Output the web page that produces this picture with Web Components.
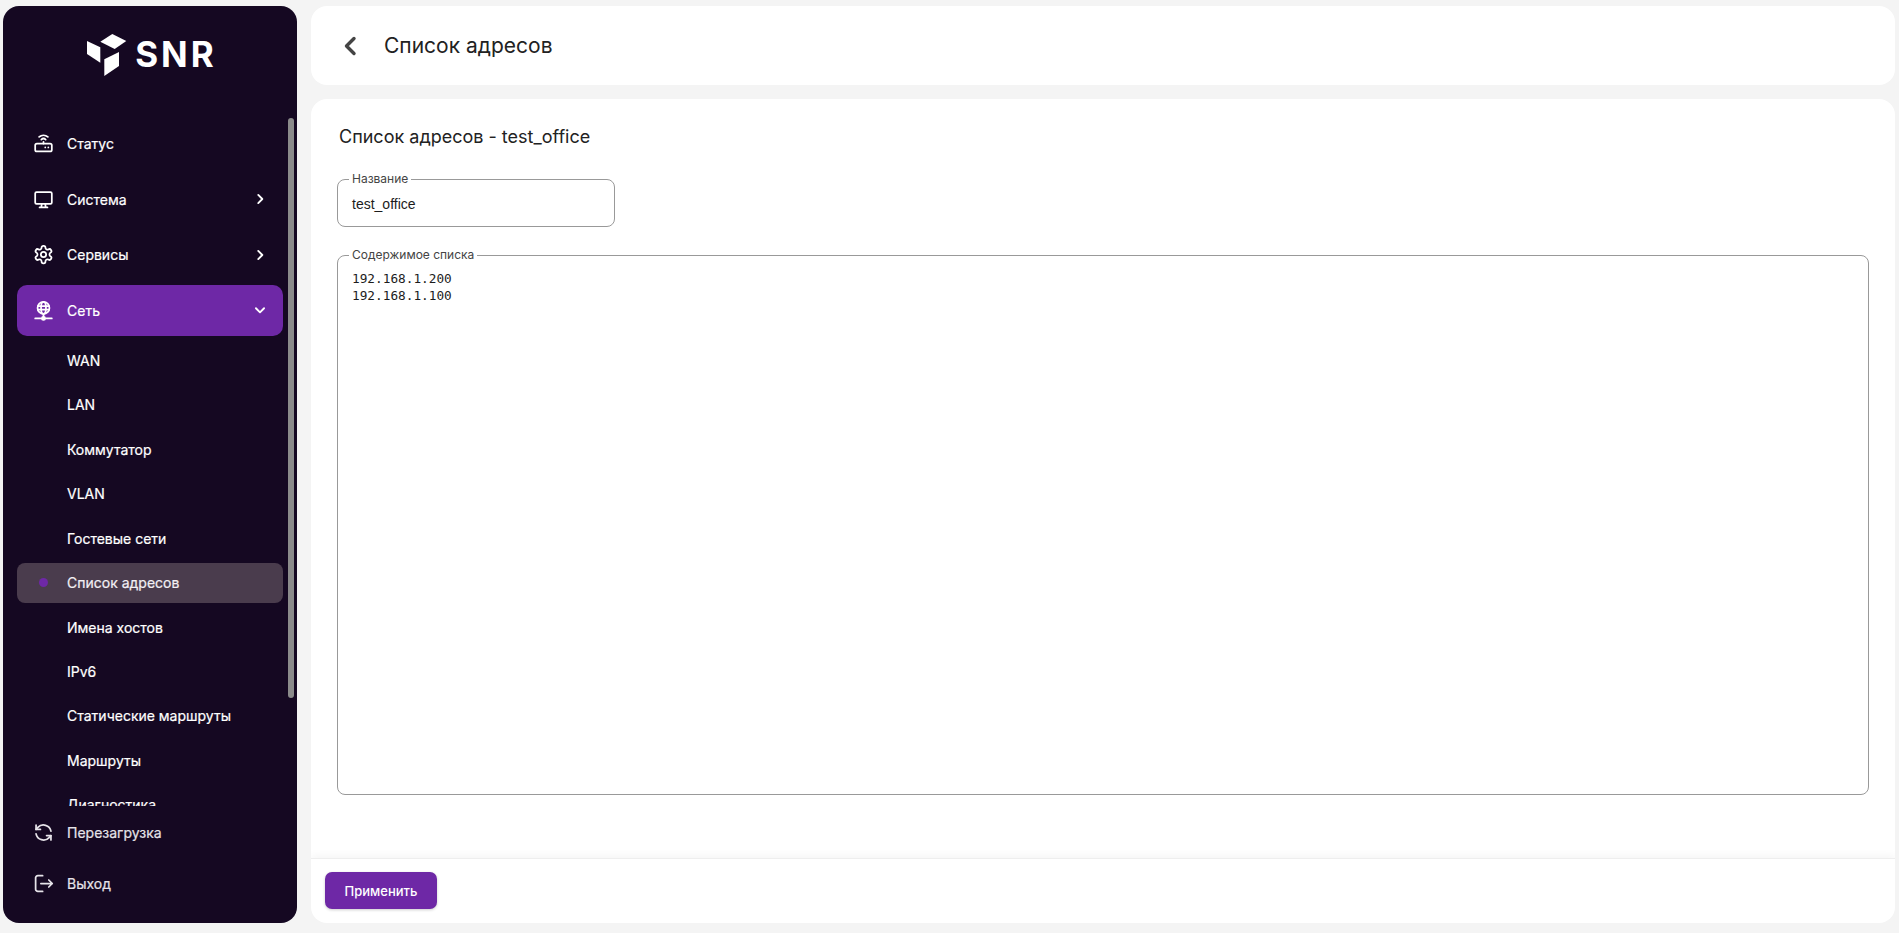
<!DOCTYPE html>
<html lang="ru">
<head>
<meta charset="utf-8">
<title>Список адресов</title>
<style>
    html, body { margin: 0; height: 100%; }
    body { background: #f4f4f4; overflow: hidden; font-family: Inter, "Liberation Sans", sans-serif; }
</style>
</head>
<body>
<app-shell>
    <side-bar slot="side">
        <nav-item slot="nav" icon="router">Статус</nav-item>
        <nav-item slot="nav" icon="monitor" arrow="right">Система</nav-item>
        <nav-item slot="nav" icon="gear" arrow="right">Сервисы</nav-item>
        <nav-item slot="nav" icon="globe" arrow="down" active>Сеть</nav-item>
        <sub-item slot="nav">WAN</sub-item>
        <sub-item slot="nav">LAN</sub-item>
        <sub-item slot="nav">Коммутатор</sub-item>
        <sub-item slot="nav">VLAN</sub-item>
        <sub-item slot="nav">Гостевые сети</sub-item>
        <sub-item slot="nav" current>Список адресов</sub-item>
        <sub-item slot="nav">Имена хостов</sub-item>
        <sub-item slot="nav">IPv6</sub-item>
        <sub-item slot="nav">Статические маршруты</sub-item>
        <sub-item slot="nav">Маршруты</sub-item>
        <sub-item slot="nav">Диагностика</sub-item>
        <nav-item slot="foot" icon="reload" dim>Перезагрузка</nav-item>
        <nav-item slot="foot" icon="exit" dim>Выход</nav-item>
    </side-bar>
    <page-header slot="head">Список адресов</page-header>
    <form-card slot="body" heading="Список адресов - test_office">
        <outlined-field label="Название" value="test_office"></outlined-field>
        <outlined-area label="Содержимое списка" value="192.168.1.200&#10;192.168.1.100"></outlined-area>
        <primary-button slot="actions">Применить</primary-button>
    </form-card>
</app-shell>

<script>
const ICONS = {
    router: `<rect x="2.500" y="12" width="19" height="9" rx="2"/><path d="M12 10v2M14 16.500h.01M17.500 16.500h.01"/><path d="M9.500 7.500a3.600 3.600 0 0 1 5 0M7 4.500a7.500 7.500 0 0 1 10 0"/>`,
    monitor: `<rect x="2.500" y="3.500" width="19" height="13.500" rx="1.500"/><path d="M7.500 21h9M10 17l-.5 4M14 17l.5 4"/>`,
    gear: `<path d="M12.220 2h-.44a2 2 0 0 0-2 2v.18a2 2 0 0 1-1 1.730l-.43.25a2 2 0 0 1-2 0l-.15-.08a2 2 0 0 0-2.730.73l-.22.38a2 2 0 0 0 .73 2.730l.15.1a2 2 0 0 1 1 1.720v.51a2 2 0 0 1-1 1.740l-.15.09a2 2 0 0 0-.73 2.730l.22.38a2 2 0 0 0 2.730.73l.15-.08a2 2 0 0 1 2 0l.43.25a2 2 0 0 1 1 1.730V20a2 2 0 0 0 2 2h.44a2 2 0 0 0 2-2v-.18a2 2 0 0 1 1-1.730l.43-.25a2 2 0 0 1 2 0l.15.08a2 2 0 0 0 2.730-.73l.22-.39a2 2 0 0 0-.73-2.730l-.15-.08a2 2 0 0 1-1-1.740v-.5a2 2 0 0 1 1-1.740l.15-.09a2 2 0 0 0 .73-2.730l-.22-.38a2 2 0 0 0-2.730-.73l-.15.08a2 2 0 0 1-2 0l-.43-.25a2 2 0 0 1-1-1.730V4a2 2 0 0 0-2-2z"/><circle cx="12" cy="12" r="3"/>`,
    globe: `<circle cx="12" cy="9" r="6.800"/><ellipse cx="12" cy="9" rx="2.800" ry="6.800"/><path d="M5.500 7h13M5.500 11h13M12 16v3"/><path d="M2.500 21h7M14.500 21h7"/><circle cx="12" cy="21" r="1.800" fill="currentColor"/>`,
    reload: `<path d="M20.500 10.500A8.700 8.700 0 0 0 5.600 6.200L3.500 8.500"/><path d="M3.500 3.500v5h5"/><path d="M3.500 13.500a8.700 8.700 0 0 0 14.900 4.300l2.100-2.300"/><path d="M20.500 20.500v-5h-5"/>`,
    exit: `<path d="M11 3H5.500A2.500 2.500 0 0 0 3 5.500v13A2.500 2.500 0 0 0 5.500 21H11"/><path d="M9 12h13M18 8l4 4-4 4"/>`
};

const CHEVRONS = {
    right: `<path d="M9 5l7 7-7 7"/>`,
    down: `<path d="M5 9l7 7 7-7"/>`
};

class AppShell extends HTMLElement {
    constructor() {
        super();
        this.attachShadow({ mode: "open" });
        this.shadowRoot.innerHTML = `
            <style>
            :host {
                display: grid;
                grid-template-columns: 294px 1fr;
                grid-template-rows: 79px 1fr;
                column-gap: 14px;
                row-gap: 14px;
                box-sizing: border-box;
                height: 933px;
                padding: 6px 4px 10px 3px;
            }
            .side { grid-row: 1 / 3; min-height: 0; display: flex; }
            .side ::slotted(*) { flex: 1; }
            .body { min-height: 0; display: flex; }
            .body ::slotted(*) { flex: 1; }
            </style>
            <div class="side"><slot name="side"></slot></div>
            <div><slot name="head"></slot></div>
            <div class="body"><slot name="body"></slot></div>
        `;
    }
}

class SideBar extends HTMLElement {
    constructor() {
        super();
        this.attachShadow({ mode: "open" });
        this.shadowRoot.innerHTML = `
            <style>
            :host {
                display: flex;
                flex-direction: column;
                position: relative;
                min-width: 0;
                background: #150822;
                border-radius: 16px;
                color: #fff;
                overflow: hidden;
            }
            .logo {
                height: 112px;
                flex: none;
                display: flex;
                align-items: flex-start;
                justify-content: center;
                gap: 8px;
                padding-top: 27px;
                box-sizing: border-box;
            }
            .logo svg { width: 41px; height: 44px; flex: none; }
            .logo span {
                font: 700 35px/36px Inter, "Liberation Sans", sans-serif;
                letter-spacing: 3px;
                margin-top: 3px;
                margin-right: -3px;
            }
            .nav {
                flex: 1;
                min-height: 0;
                overflow: hidden;
                display: flex;
                flex-direction: column;
                gap: 4.650px;
                padding: 0 14px;
            }
            .thumb {
                position: absolute;
                left: 285px;
                top: 112px;
                width: 6px;
                height: 580px;
                border-radius: 3px;
                background: #8b8b8b;
            }
            .foot {
                flex: none;
                height: 117px;
                box-sizing: border-box;
                padding: 0.500px 14px 0;
                display: flex;
                flex-direction: column;
            }
            </style>
            <div class="logo">
                <svg viewBox="0 0 41 44" fill="#fff">
                    <path d="M26.300 1 40.300 8 28.700 16 14.300 8.700z"/>
                    <path d="M1 8 14.300 14.300V29.700L1 21z"/>
                    <path d="M18.300 26.300 33 19V33L18.300 43z"/>
                </svg>
                <span>SNR</span>
            </div>
            <div class="nav"><slot name="nav"></slot></div>
            <div class="thumb"></div>
            <div class="foot"><slot name="foot"></slot></div>
        `;
    }
}

class NavItem extends HTMLElement {
    connectedCallback() {
        if (this.shadowRoot) return;
        this.attachShadow({ mode: "open" });
        const arrow = this.getAttribute("arrow");
        this.shadowRoot.innerHTML = `
            <style>
            :host {
                display: flex;
                align-items: center;
                flex: none;
                height: 51px;
                padding: 0 16px 0 15.500px;
                border-radius: 10px;
                font: 400 14px Inter, "Liberation Sans", sans-serif;
                -webkit-text-stroke: 0.2px currentColor;
                color: #fff;
            }
            :host([active]) { background: #6e28a6; }
            :host([dim]) { color: #e6e3e9; }
            .icon { width: 21px; height: 21px; flex: none; margin-right: 13.500px; stroke-width: 2; }
            .label { flex: 1; }
            .arrow { width: 14px; height: 14px; flex: none; stroke-width: 3.200; }
            svg { fill: none; stroke: currentColor; stroke-linecap: round; stroke-linejoin: round; }
            </style>
            <svg class="icon" viewBox="0 0 24 24">${ICONS[this.getAttribute("icon")] || ""}</svg>
            <span class="label"><slot></slot></span>
            ${arrow ? `<svg class="arrow" viewBox="0 0 24 24">${CHEVRONS[arrow]}</svg>` : ""}
        `;
    }
}

class SubItem extends HTMLElement {
    constructor() {
        super();
        this.attachShadow({ mode: "open" });
        this.shadowRoot.innerHTML = `
            <style>
            :host {
                display: flex;
                align-items: center;
                flex: none;
                height: 39.800px;
                padding-left: 50px;
                border-radius: 8px;
                font: 400 14px Inter, "Liberation Sans", sans-serif;
                -webkit-text-stroke: 0.2px currentColor;
                color: #fff;
                position: relative;
            }
            :host([current]) { background: #4a3c4d; color: #f2eff4; }
            :host([current])::before {
                content: "";
                position: absolute;
                left: 21.500px;
                top: 50%;
                width: 9px;
                height: 9px;
                margin-top: -4.500px;
                border-radius: 50%;
                background: #6e28a6;
            }
            </style>
            <slot></slot>
        `;
    }
}

class PageHeader extends HTMLElement {
    constructor() {
        super();
        this.attachShadow({ mode: "open" });
        this.shadowRoot.innerHTML = `
            <style>
            :host {
                display: flex;
                align-items: center;
                height: 79px;
                box-sizing: border-box;
                padding-left: 27px;
                background: #fff;
                border-radius: 16px;
                font: 400 21px Inter, "Liberation Sans", sans-serif;
                color: #222;
            }
            svg {
                width: 24px;
                height: 24px;
                margin-right: 22px;
                fill: none;
                stroke: #444;
                stroke-width: 3.400;
                stroke-linecap: round;
                stroke-linejoin: round;
            }
            </style>
            <svg viewBox="0 0 24 24"><path d="M16 4.500 8.500 12l7.500 7.500"/></svg>
            <slot></slot>
        `;
    }
}

class FormCard extends HTMLElement {
    constructor() {
        super();
        this.attachShadow({ mode: "open" });
        this.shadowRoot.innerHTML = `
            <style>
            :host {
                display: flex;
                flex-direction: column;
                background: #fff;
                border-radius: 16px;
                min-width: 0;
                overflow: hidden;
            }
            .content {
                flex: 1;
                min-height: 0;
                padding: 26px 26px 0 26px;
            }
            h2 {
                margin: 0 0 30px 2px;
                font: 400 18px/24px Inter, "Liberation Sans", sans-serif;
                color: #222;
            }
            .fields { display: flex; flex-direction: column; gap: 28px; }
            .actions {
                flex: none;
                height: 65px;
                box-sizing: border-box;
                padding: 13px 14px;
                border-top: 1px solid #eeeeee;
                box-shadow: 0 -3px 8px rgba(0, 0, 0, 0.04);
            }
            </style>
            <div class="content">
                <h2>${this.getAttribute("heading")}</h2>
                <div class="fields"><slot></slot></div>
            </div>
            <div class="actions"><slot name="actions"></slot></div>
        `;
    }
}

const outlineStyles = `
    fieldset {
        margin: 0;
        padding: 0 14px;
        border: 1px solid #999;
        border-radius: 8px;
        box-sizing: border-box;
        min-width: 0;
    }
    legend {
        padding: 0 3px;
        margin-left: -3px;
        font: 400 12px/14px Inter, "Liberation Sans", sans-serif;
        color: #444;
    }
`;

class OutlinedField extends HTMLElement {
    constructor() {
        super();
        this.attachShadow({ mode: "open" });
    }

    connectedCallback() {
        this.shadowRoot.innerHTML = `
            <style>
            :host { display: block; width: 278px; }
            ${outlineStyles}
            fieldset { height: 55px; margin-top: -7px; }
            .value {
                font: 400 14px/20px "Liberation Sans", sans-serif;
                color: #1c1c1c;
                margin-top: 8px;
            }
            </style>
            <fieldset>
                <legend>${this.getAttribute("label")}</legend>
                <div class="value">${this.getAttribute("value")}</div>
            </fieldset>
        `;
    }
}

class OutlinedArea extends HTMLElement {
    constructor() {
        super();
        this.attachShadow({ mode: "open" });
    }

    connectedCallback() {
        this.shadowRoot.innerHTML = `
            <style>
            :host { display: block; }
            ${outlineStyles}
            fieldset { height: 547px; margin-top: -7px; }
            pre {
                margin: 8px 0 0;
                font: 400 12.750px/17px "DejaVu Sans Mono", monospace;
                color: #1c1c1c;
            }
            </style>
            <fieldset>
                <legend>${this.getAttribute("label")}</legend>
                <pre>${this.getAttribute("value")}</pre>
            </fieldset>
        `;
    }
}

class PrimaryButton extends HTMLElement {
    constructor() {
        super();
        this.attachShadow({ mode: "open" });
        this.shadowRoot.innerHTML = `
            <style>
            :host {
                display: inline-flex;
                align-items: center;
                justify-content: center;
                width: 112px;
                height: 37px;
                border-radius: 7px;
                background: #6e28a6;
                color: #fff;
                font: 500 13px Inter, "Liberation Sans", sans-serif;
                box-shadow: 0 1px 3px rgba(0, 0, 0, 0.2);
            }
            </style>
            <slot></slot>
        `;
    }
}

customElements.define("app-shell", AppShell);
customElements.define("side-bar", SideBar);
customElements.define("nav-item", NavItem);
customElements.define("sub-item", SubItem);
customElements.define("page-header", PageHeader);
customElements.define("form-card", FormCard);
customElements.define("outlined-field", OutlinedField);
customElements.define("outlined-area", OutlinedArea);
customElements.define("primary-button", PrimaryButton);
</script>
</body>
</html>
